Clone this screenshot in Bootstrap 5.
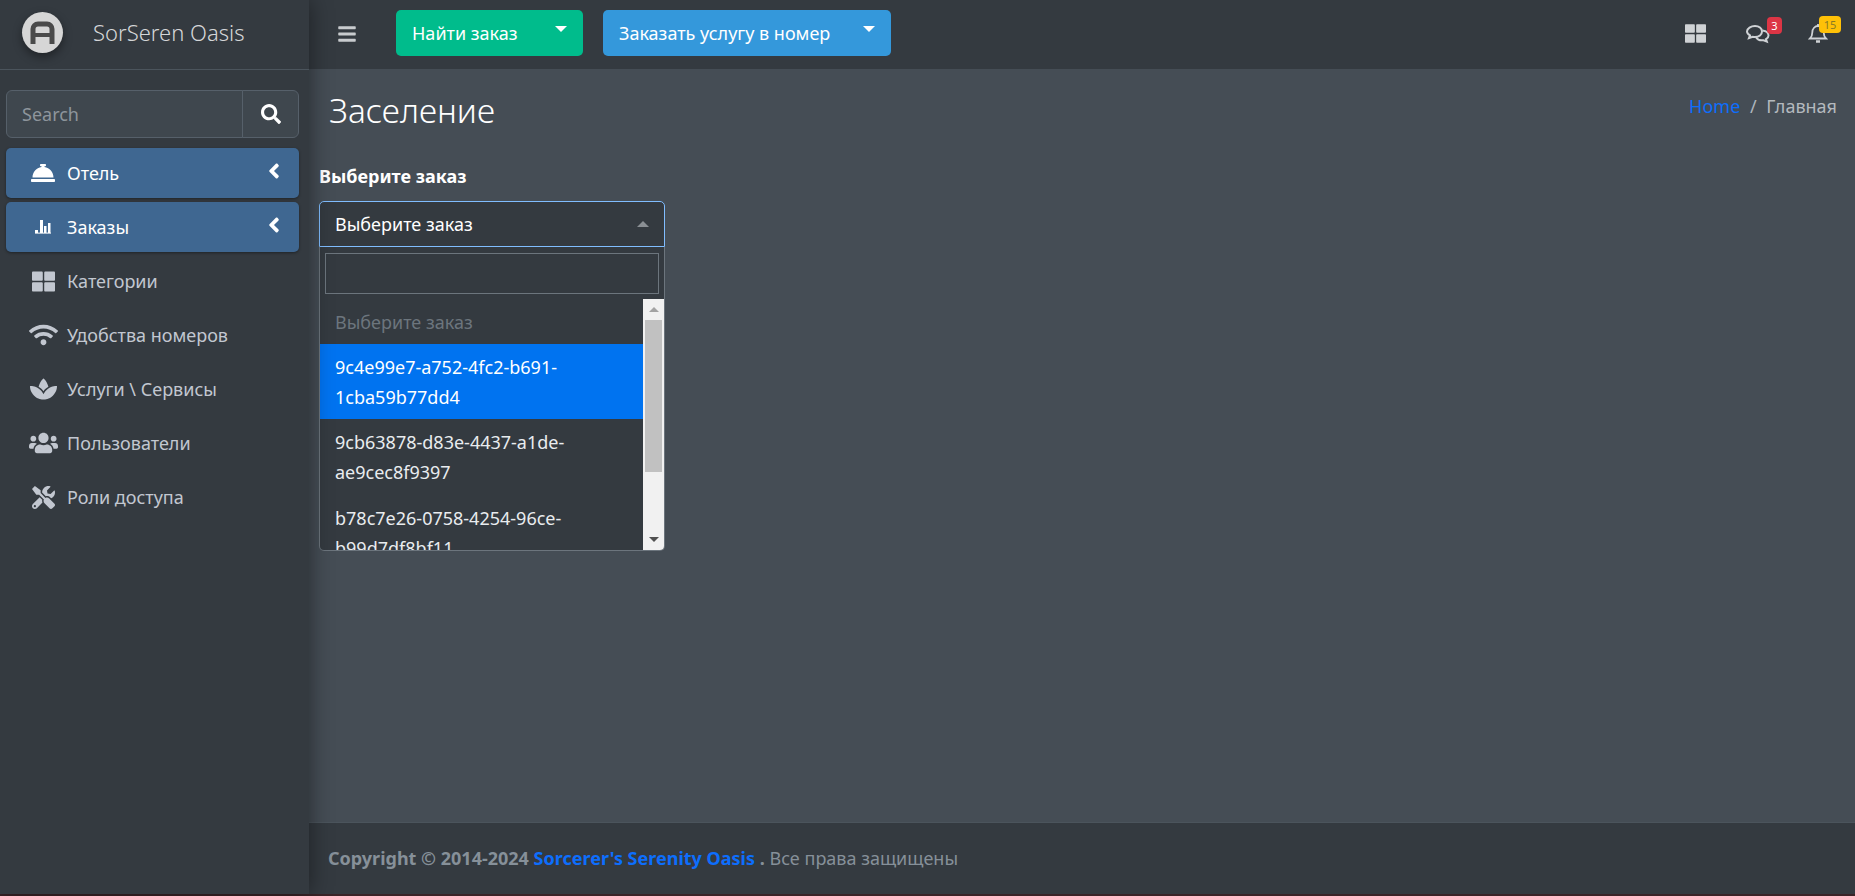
<!doctype html>
<html lang="ru">
<head>
<meta charset="utf-8">
<title>Заселение</title>
<link href="https://cdn.jsdelivr.net/npm/bootstrap@5.3.0/dist/css/bootstrap.min.css" rel="stylesheet">
<style>
html,body{height:896px;overflow:hidden}
body{font-family:"Noto Sans",sans-serif;font-size:18px;background:#3b2428;color:#fff}
.app-shell{display:flex;height:894px}
.side-panel{width:309px;flex:none;background:#343a40;box-shadow:0 0 22px rgba(0,0,0,.45);position:relative;z-index:2}
.brand-box{height:70px;display:flex;align-items:center;border-bottom:1px solid #4b545c;padding-left:22px;gap:30px}
.brand-logo{width:41px;height:41px;margin-top:-4px;border-radius:50%;background:#d6d6d6;box-shadow:0 4px 10px rgba(0,0,0,.4);display:flex;align-items:center;justify-content:center}
.brand-name{font-size:22px;font-weight:300;color:#d4d6d8;margin-top:-4px}
.side-body{padding:20px 10px 0 6px}
.side-search{height:48px;margin-bottom:10px}
.side-search .form-control{background:#3f474e;border:1px solid #56606a;color:#fff;font-size:18px;padding-left:15px;box-shadow:none}
.side-search .form-control::placeholder{color:#8e959c}
.side-search .btn{width:57px;background:#3f474e;border:1px solid #56606a;display:flex;align-items:center;justify-content:center;padding:0}
.side-item{height:50px;display:flex;align-items:center;color:#c2c7d0;text-decoration:none;border-radius:5px;margin-bottom:4px;padding-left:24px;font-size:18px}
.side-item.is-on{background:#3f6791;color:#fff;box-shadow:0 1px 3px rgba(0,0,0,.4)}
.side-ico{width:26px;height:24px;flex:none;margin-right:11px;display:flex;align-items:center;justify-content:center}
.side-ico svg{fill:currentColor;display:block;flex:none}
.side-chev{margin-left:auto;margin-right:19px;margin-top:-5px}
.main-col{flex:1;min-width:0;display:flex;flex-direction:column}
.top-bar{height:69px;flex:none;background:#343a40;padding:0 0 0 29px;align-items:center;flex-wrap:nowrap;justify-content:flex-start}
.burger{margin-right:40px;display:flex;color:#c8cbce;margin-top:-2px}
.top-btn{height:46px;color:#fff;border:0;border-radius:5px;font-size:18px;display:flex;align-items:center;padding:2px 16px 0;margin-top:-4px}
.top-btn.dropdown-toggle::after{border-top-width:6px;border-left-width:6.5px;border-right-width:6.5px;border-bottom:0;margin-left:auto;margin-top:-9px}
.tb-green{background:#00bc8c;width:187px;margin-right:20px}
.tb-blue{background:#3498db;width:288px}
.top-right{margin-left:auto;display:flex;align-items:center;color:#cfd2d5;padding-right:27px;margin-top:-2px}
.top-ico{position:relative;display:flex;margin-left:40px}
.top-ico svg{display:block}
.top-ico.ico-last{margin-left:38px}
.ico-badge{position:absolute;font-size:11px;font-weight:400;line-height:15px;height:17px;padding:1px 0;border-radius:4px;text-align:center}
.bdg-red{background:#dc3545;color:#fff;width:15px;top:-7px;left:21px}
.bdg-yel{background:#ffc107;color:#8a7b25;width:22px;top:-7px;left:11px}
.page-body{flex:1;padding:0 18px 0 10px;background:#454d55}
.page-head{display:flex;justify-content:space-between;align-items:flex-start;padding:16px 0 0 10px;height:92px}
.page-title{font-size:33.500px;font-weight:300;color:#fff;margin:0;line-height:50px}
.crumbs{font-size:18px;margin:8px 0 0;--bs-breadcrumb-divider-color:#adb5bd;--bs-breadcrumb-item-active-color:#b4b9be;--bs-breadcrumb-item-padding-x:.6rem}
.crumbs a{color:#0d6efd;text-decoration:none}
.pick-label{font-weight:700;font-size:18px;line-height:24px;display:block;margin:3px 0 13px}
.pick-wrap{width:346px}
.pick-head{height:46px;background:#343a40;border:1px solid #80bdff;border-radius:5px 5px 0 0;padding:0 15px;display:flex;align-items:center;justify-content:space-between;font-size:18px}
.pick-caret{width:0;height:0;border:6px solid transparent;border-bottom:6px solid #8a8f94;border-top:0}
.pick-drop{height:304px;background:#343a40;border:1px solid #6c757d;border-top:0;border-radius:0 0 5px 5px;overflow:hidden;display:flex;flex-direction:column}
.pick-find{padding:6px 5px 5px;height:52px;flex:none}
.pick-find input{display:block;width:100%;height:41px;background:#343a40;border:1px solid #6c757d;border-radius:0}
.pick-rows{flex:1;display:flex;min-height:0}
.pick-list{flex:1;overflow:hidden;min-width:0}
.pick-opt{padding:9px 15px 7px;font-size:18px;line-height:29.700px;word-break:break-all;color:#e9ecef}
.pick-opt.is-muted{color:#6c757d;height:45px;line-height:37px;padding:5px 15px}
.pick-opt.is-sel{background:#0073f0;color:#fff}
.fake-scroll{width:21px;flex:none;background:#f1f1f1;display:flex;flex-direction:column;align-items:center;padding:0 2px}
.fs-arrow{height:21px;flex:none;display:flex;align-items:center;justify-content:center}
.fs-thumb{height:152px;width:100%;background:#c1c1c1}
.fs-gap{flex:1}
.arr-up{border:5px solid transparent;border-top:0;border-bottom:5px solid #a3a3a3;width:0;height:0}
.arr-dn{border:5px solid transparent;border-bottom:0;border-top:5px solid #505050;width:0;height:0}
.page-foot{height:72px;flex:none;background:#343a40;border-top:1px solid #4b545c;padding-left:19px;display:flex;align-items:center;color:#869099;font-size:18px}
.page-foot a{color:#0d6efd;text-decoration:none;font-weight:700}
.page-foot b{font-weight:700}
</style>
</head>
<body>
<div class="app-shell">
  <aside class="side-panel">
    <div class="brand-box">
      <span class="brand-logo">
        <svg width="25" height="24" viewBox="0 0 25 24"><path d="M3 23V8a5 5 0 0 1 5-5h9a5 5 0 0 1 5 5v15" fill="none" stroke="#4a4a4a" stroke-width="5"/><rect x="4" y="12" width="17" height="4" fill="#4a4a4a"/></svg>
      </span>
      <span class="brand-name">SorSeren Oasis</span>
    </div>
    <div class="side-body">
      <div class="input-group side-search">
        <input class="form-control" type="text" placeholder="Search">
        <button class="btn" type="button" aria-label="Search">
          <svg width="20" height="20" viewBox="0 0 512 512" fill="#fff"><path d="M505 442.7L405.3 343c-4.5-4.5-10.6-7-17-7H372c27.6-35.3 44-79.7 44-128C416 93.1 322.9 0 208 0S0 93.1 0 208s93.1 208 208 208c48.3 0 92.7-16.4 128-44v16.3c0 6.4 2.5 12.5 7 17l99.7 99.7c9.4 9.4 24.6 9.4 33.9 0l28.3-28.3c9.4-9.4 9.4-24.6.1-34zM208 336c-70.7 0-128-57.2-128-128 0-70.7 57.2-128 128-128 70.7 0 128 57.2 128 128 0 70.7-57.2 128-128 128z"/></svg>
        </button>
      </div>
      <nav>
        <a class="side-item is-on" href="#"><span class="side-ico"><svg width="24" height="24" viewBox="0 0 512 512"><path d="M288 130.54V112h16c8.84 0 16-7.16 16-16V80c0-8.84-7.16-16-16-16h-96c-8.84 0-16 7.16-16 16v16c0 8.84 7.16 16 16 16h16v18.54C115.49 146.11 32 239.18 32 352h448c0-112.82-83.49-205.89-192-221.46zM496 384H16c-8.84 0-16 7.16-16 16v32c0 8.84 7.16 16 16 16h480c8.84 0 16-7.16 16-16v-32c0-8.84-7.16-16-16-16z"/></svg></span>Отель<svg class="side-chev" width="12" height="24" viewBox="0 0 256 512" fill="#fff"><path d="M31.7 239l136-136c9.4-9.4 24.6-9.4 33.9 0l22.6 22.6c9.4 9.4 9.4 24.6 0 33.9L127.9 256l96.4 96.4c9.4 9.4 9.4 24.6 0 33.9L201.7 409c-9.4 9.4-24.6 9.4-33.9 0l-136-136c-9.5-9.4-9.5-24.6-.1-34z"/></svg></a>
        <a class="side-item is-on" href="#"><span class="side-ico"><svg width="16" height="14" viewBox="0 0 16 14"><rect x="0" y="10" width="3" height="3"/><rect x="5" y="0" width="3" height="13"/><rect x="9" y="6" width="2.500" height="7"/><rect x="13" y="3" width="2.500" height="10"/><rect x="0" y="12.600" width="16" height="1"/></svg></span>Заказы<svg class="side-chev" width="12" height="24" viewBox="0 0 256 512" fill="#fff"><path d="M31.7 239l136-136c9.4-9.4 24.6-9.4 33.9 0l22.6 22.6c9.4 9.4 9.4 24.6 0 33.9L127.9 256l96.4 96.4c9.4 9.4 9.4 24.6 0 33.9L201.7 409c-9.4 9.4-24.6 9.4-33.9 0l-136-136c-9.5-9.4-9.5-24.6-.1-34z"/></svg></a>
        <a class="side-item" href="#"><span class="side-ico"><svg width="23" height="23" viewBox="0 0 512 512"><path d="M296 32h192c13.255 0 24 10.745 24 24v160c0 13.255-10.745 24-24 24H296c-13.255 0-24-10.745-24-24V56c0-13.255 10.745-24 24-24zm-80 0H24C10.745 32 0 42.745 0 56v160c0 13.255 10.745 24 24 24h192c13.255 0 24-10.745 24-24V56c0-13.255-10.745-24-24-24zM0 296v160c0 13.255 10.745 24 24 24h192c13.255 0 24-10.745 24-24V296c0-13.255-10.745-24-24-24H24c-13.255 0-24 10.745-24 24zm296 184h192c13.255 0 24-10.745 24-24V296c0-13.255-10.745-24-24-24H296c-13.255 0-24 10.745-24 24v160c0 13.255 10.745 24 24 24z"/></svg></span>Категории</a>
        <a class="side-item" href="#"><span class="side-ico"><svg width="29" height="24" viewBox="0 0 640 512"><path d="M634.91 154.88C457.74-8.99 182.19-8.93 5.09 154.88c-6.66 6.16-6.79 16.59-.35 22.98l34.24 33.97c6.14 6.1 16.02 6.23 22.4.38 145.92-133.68 371.3-133.71 517.25 0 6.38 5.85 16.26 5.71 22.4-.38l34.24-33.97c6.43-6.39 6.3-16.82-.36-22.98zM320 352c-35.35 0-64 28.65-64 64s28.65 64 64 64 64-28.65 64-64-28.65-64-64-64zm202.67-83.59c-115.26-101.93-290.21-101.82-405.34 0-6.9 6.1-7.12 16.69-.57 23.15l34.44 33.99c6 5.92 15.66 6.32 22.05.8 83.95-72.57 209.74-72.41 293.49 0 6.39 5.52 16.05 5.13 22.05-.8l34.44-33.99c6.56-6.46 6.33-17.06-.56-23.15z"/></svg></span>Удобства номеров</a>
        <a class="side-item" href="#"><span class="side-ico"><svg width="27" height="24" viewBox="0 0 576 512"><path d="M568.25 192c-29.04.13-135.01 6.16-213.84 83-33.12 29.63-53.36 63.3-66.41 94.86-13.05-31.56-33.29-65.23-66.41-94.86-78.83-76.84-184.8-82.87-213.84-83-4.41-.02-7.79 3.4-7.75 7.82.23 27.92 7.14 126.14 88.77 199.3C172.79 480.94 256 480 288 480s115.19.95 199.23-80.88c81.64-73.17 88.54-171.38 88.77-199.3.04-4.42-3.34-7.84-7.75-7.82zM287.98 302.6c12.82-18.85 27.6-35.78 44.09-50.52 19.09-18.61 39.58-33.3 60.26-45.18-16.44-70.5-51.72-133.05-96.73-172.22-4.11-3.58-11.02-3.58-15.14 0-44.99 39.14-80.27 101.63-96.74 172.07 20.37 11.7 40.5 26.14 59.22 44.39a282.768 282.768 0 0 1 45.04 51.46z"/></svg></span>Услуги \ Сервисы</a>
        <a class="side-item" href="#"><span class="side-ico"><svg width="29" height="24" viewBox="0 0 640 512"><path d="M96 224c35.3 0 64-28.7 64-64s-28.7-64-64-64-64 28.7-64 64 28.7 64 64 64zm448 0c35.3 0 64-28.7 64-64s-28.7-64-64-64-64 28.7-64 64 28.7 64 64 64zm32 32h-64c-17.6 0-33.5 7.1-45.1 18.6 40.3 22.1 68.9 62 75.1 109.4h66c17.7 0 32-14.3 32-32v-32c0-35.3-28.7-64-64-64zm-256 0c61.9 0 112-50.1 112-112S381.9 32 320 32 208 82.1 208 144s50.1 112 112 112zm76.8 32h-8.3c-20.8 10-43.9 16-68.5 16s-47.6-6-68.5-16h-8.3C179.6 288 128 339.6 128 403.2V432c0 26.5 21.5 48 48 48h288c26.5 0 48-21.5 48-48v-28.8c0-63.6-51.6-115.2-115.2-115.2zm-223.7-13.4C161.5 263.1 145.6 256 128 256H64c-35.3 0-64 28.7-64 64v32c0 17.7 14.3 32 32 32h65.9c6.3-47.4 34.9-87.3 75.2-109.4z"/></svg></span>Пользователи</a>
        <a class="side-item" href="#"><span class="side-ico"><svg width="23" height="23" viewBox="0 0 512 512"><path d="M501.1 395.7L384 278.6c-23.1-23.1-57.6-27.6-85.4-13.9L192 158.1V96L64 0 0 64l96 128h62.1l106.6 106.6c-13.6 27.8-9.2 62.3 13.9 85.4l117.1 117.1c14.6 14.6 38.2 14.6 52.7 0l52.7-52.7c14.5-14.6 14.5-38.2 0-52.7zM331.7 225c28.3 0 54.9 11 74.9 31l19.4 19.4c15.8-6.9 30.8-16.5 43.8-29.5 37.1-37.1 49.7-89.3 37.9-136.7-2.2-9-13.5-12.1-20.1-5.5l-74.4 74.4-67.9-11.3L334 98.9l74.4-74.4c6.6-6.6 3.4-17.9-5.7-20.2-47.4-11.7-99.6.9-136.6 37.9-28.5 28.5-41.9 66.1-41.2 103.6l82.1 82.1c8.1-1.9 16.5-2.9 24.7-2.9zm-103.9 82l-56.7-56.7L18.7 402.8c-25 25-25 65.5 0 90.5s65.5 25 90.5 0l123.6-123.6c-7.6-19.9-9.9-41.6-5-62.7zM64 472c-13.2 0-24-10.8-24-24 0-13.3 10.7-24 24-24s24 10.7 24 24c0 13.2-10.7 24-24 24z"/></svg></span>Роли доступа</a>
      </nav>
    </div>
  </aside>
  <div class="main-col">
    <nav class="navbar top-bar">
      <a class="burger" href="#" aria-label="Меню"><svg width="18" height="20" viewBox="0 0 448 512" fill="currentColor"><path d="M16 132h416c8.837 0 16-7.163 16-16V76c0-8.837-7.163-16-16-16H16C7.163 60 0 67.163 0 76v40c0 8.837 7.163 16 16 16zm0 160h416c8.837 0 16-7.163 16-16v-40c0-8.837-7.163-16-16-16H16c-8.837 0-16 7.163-16 16v40c0 8.837 7.163 16 16 16zm0 160h416c8.837 0 16-7.163 16-16v-40c0-8.837-7.163-16-16-16H16c-8.837 0-16 7.163-16 16v40c0 8.837 7.163 16 16 16z"/></svg></a>
      <button class="btn top-btn tb-green dropdown-toggle" type="button">Найти заказ</button>
      <button class="btn top-btn tb-blue dropdown-toggle" type="button">Заказать услугу в номер</button>
      <div class="top-right">
        <span class="top-ico"><svg width="21" height="21" viewBox="0 0 512 512" fill="currentColor"><path d="M296 32h192c13.255 0 24 10.745 24 24v160c0 13.255-10.745 24-24 24H296c-13.255 0-24-10.745-24-24V56c0-13.255 10.745-24 24-24zm-80 0H24C10.745 32 0 42.745 0 56v160c0 13.255 10.745 24 24 24h192c13.255 0 24-10.745 24-24V56c0-13.255-10.745-24-24-24zM0 296v160c0 13.255 10.745 24 24 24h192c13.255 0 24-10.745 24-24V296c0-13.255-10.745-24-24-24H24c-13.255 0-24 10.745-24 24zm296 184h192c13.255 0 24-10.745 24-24V296c0-13.255-10.745-24-24-24H296c-13.255 0-24 10.745-24 24v160c0 13.255 10.745 24 24 24z"/></svg></span>
        <span class="top-ico"><svg width="24" height="20" viewBox="0 0 24 20" fill="none" stroke="currentColor" stroke-width="2"><path d="M9 2c4 0 7 2.400 7 5.500S13 13 9 13c-.8 0-1.600-.1-2.300-.3L3 14l1-2.600C2.200 10.400 1 9 1 7.500 1 4.400 5 2 9 2z"/><path d="M16.500 6.500c3.500.5 6 2.500 6 5 0 1.500-1 2.800-2.500 3.600l.8 2.400-3.300-1.300c-3 .5-6-.5-7.500-3"/></svg><span class="ico-badge bdg-red">3</span></span>
        <span class="top-ico ico-last"><svg width="20" height="21" viewBox="0 0 20 21" fill="none" stroke="currentColor" stroke-width="1.800"><path d="M2 15.500c1.500-1.500 2.300-3 2.300-6C4.300 5.500 7 3 10 3s5.700 2.500 5.700 6.500c0 3 .8 4.500 2.300 6z"/><path d="M8 18.500h4" stroke-width="2.500"/><path d="M10 1v2"/></svg><span class="ico-badge bdg-yel">15</span></span>
      </div>
    </nav>
    <main class="page-body">
      <div class="page-head">
        <h1 class="page-title">Заселение</h1>
        <ol class="breadcrumb crumbs">
          <li class="breadcrumb-item"><a href="#">Home</a></li>
          <li class="breadcrumb-item active">Главная</li>
        </ol>
      </div>
      <div class="pick-wrap">
        <label class="pick-label">Выберите заказ</label>
        <div class="pick-head"><span>Выберите заказ</span><span class="pick-caret"></span></div>
        <div class="pick-drop">
          <div class="pick-find"><input type="text" aria-label="Поиск"></div>
          <div class="pick-rows">
            <div class="pick-list">
              <div class="pick-opt is-muted">Выберите заказ</div>
              <div class="pick-opt is-sel">9c4e99e7-a752-4fc2-b691-<br>1cba59b77dd4</div>
              <div class="pick-opt">9cb63878-d83e-4437-a1de-<br>ae9cec8f9397</div>
              <div class="pick-opt">b78c7e26-0758-4254-96ce-<br>b99d7df8bf11</div>
            </div>
            <div class="fake-scroll">
              <div class="fs-arrow"><span class="arr-up"></span></div>
              <div class="fs-thumb"></div>
              <div class="fs-gap"></div>
              <div class="fs-arrow"><span class="arr-dn"></span></div>
            </div>
          </div>
        </div>
      </div>
    </main>
    <footer class="page-foot"><span><b>Copyright © 2014-2024 <a href="#">Sorcerer's Serenity Oasis</a> .</b> Все права защищены</span></footer>
  </div>
</div>
<script src="https://cdn.jsdelivr.net/npm/bootstrap@5.3.0/dist/js/bootstrap.bundle.min.js"></script>
</body>
</html>
